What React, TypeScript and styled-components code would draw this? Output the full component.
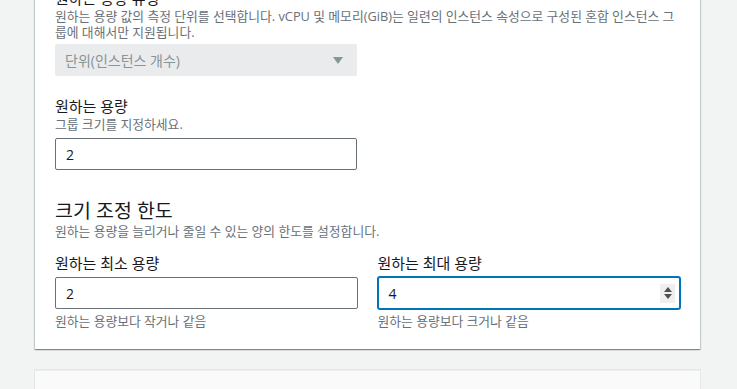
import styled, { createGlobalStyle } from 'styled-components';

const GlobalStyle = createGlobalStyle`
  html, body {
    margin: 0;
    padding: 0;
    background-color: #f2f3f3;
    overflow: hidden;
  }
  body {
    font-family: "Open Sans", "Noto Sans CJK KR", sans-serif;
    color: #16191f;
  }
`;

const Page = styled.div`
  display: flex;
  flex-direction: column;
  gap: 21px;
  padding: 0 37px 0 35px;
  margin-top: -33px;
`;

const Card = styled.section<{ $muted?: boolean }>`
  background-color: ${(p) => (p.$muted ? '#fafafa' : '#ffffff')};
  border-top: 1px solid #eaeded;
  box-shadow: ${(p) =>
    p.$muted
      ? '0 0 0 1px #e4e7e7'
      : '0 1px 1px 0 rgba(0, 28, 36, 0.3), 1px 1px 1px 0 rgba(0, 28, 36, 0.15), -1px 1px 1px 0 rgba(0, 28, 36, 0.15)'};
  padding: 20px 20px 20px;
  display: flex;
  flex-direction: column;
  gap: 20px;
  min-height: ${(p) => (p.$muted ? '60px' : 'auto')};
`;

const Field = styled.div`
  display: flex;
  flex-direction: column;
`;

const Label = styled.div`
  font-size: 15px;
  line-height: 20px;
  color: #16191f;
`;

const Desc = styled.div`
  font-size: 12.8px;
  line-height: 16px;
  color: #687078;
  word-break: normal;
  line-break: anywhere;
`;

const Control = styled.div<{ $gap?: number }>`
  margin-top: ${(p) => p.$gap ?? 6}px;
  position: relative;
`;

const Select = styled.div`
  height: 32px;
  box-sizing: border-box;
  background-color: #e9ebed;
  border-radius: 2px;
  padding: 0 14px 0 10px;
  display: flex;
  align-items: center;
  justify-content: space-between;
  font-size: 14px;
  color: #879596;
  width: 302px;
`;

const Caret = styled.span`
  width: 0;
  height: 0;
  border-left: 5px solid transparent;
  border-right: 5px solid transparent;
  border-top: 7px solid #879596;
`;

const Input = styled.div<{ $focus?: boolean }>`
  height: 32px;
  box-sizing: border-box;
  border: 1px solid ${(p) => (p.$focus ? '#0073bb' : '#687078')};
  box-shadow: ${(p) => (p.$focus ? '0 0 0 1px #0073bb' : 'none')};
  border-radius: 2px;
  background: #fff;
  padding: 0 10px;
  display: flex;
  align-items: center;
  justify-content: space-between;
  font-size: 14px;
  color: #16191f;
`;

const Spinner = styled.div`
  width: 15px;
  height: 19px;
  background-color: #efefef;
  display: flex;
  flex-direction: column;
  align-items: center;
  justify-content: center;
  gap: 2px;
  margin-right: -6px;
`;

const Arrow = styled.span<{ $up?: boolean }>`
  width: 0;
  height: 0;
  border-left: 4px solid transparent;
  border-right: 4px solid transparent;
  ${(p) => (p.$up ? 'border-bottom: 5px solid #505050;' : 'border-top: 5px solid #505050;')}
`;

const Section = styled.div`
  display: flex;
  flex-direction: column;
  margin-top: 9px;
`;

const Heading = styled.h2`
  margin: 0;
  font-weight: 400;
  font-size: 19.5px;
  line-height: 24px;
  color: #16191f;
`;

const Columns = styled.div`
  display: grid;
  grid-template-columns: 1fr 1fr;
  gap: 20px;
  margin-top: 14px;
`;

const Hint = styled(Desc)`
  margin-top: 4px;
`;

export default function App() {
  return (
    <>
      <GlobalStyle />
      <Page>
        <Card>
          <Field>
            <Label>원하는 용량 유형</Label>
            <Desc>
              원하는 용량 값의 측정 단위를 선택합니다. vCPU 및 메모리(GiB)는 일련의 인스턴스 속성으로
              구성된 혼합 인스턴스 그룹에 대해서만 지원됩니다.
            </Desc>
            <Control $gap={4}>
              <Select>
                <span>단위(인스턴스 개수)</span>
                <Caret />
              </Select>
            </Control>
          </Field>
          <Field>
            <Label>원하는 용량</Label>
            <Desc>그룹 크기를 지정하세요.</Desc>
            <Control style={{ width: 302 }}>
              <Input>2</Input>
            </Control>
          </Field>
          <Section>
            <Heading>크기 조정 한도</Heading>
            <Desc>원하는 용량을 늘리거나 줄일 수 있는 양의 한도를 설정합니다.</Desc>
            <Columns>
              <Field>
                <Label>원하는 최소 용량</Label>
                <Control $gap={4}>
                  <Input>2</Input>
                </Control>
                <Hint>원하는 용량보다 작거나 같음</Hint>
              </Field>
              <Field>
                <Label>원하는 최대 용량</Label>
                <Control $gap={4}>
                  <Input $focus>
                    <span>4</span>
                    <Spinner>
                      <Arrow $up />
                      <Arrow />
                    </Spinner>
                  </Input>
                </Control>
                <Hint>원하는 용량보다 크거나 같음</Hint>
              </Field>
            </Columns>
          </Section>
        </Card>
        <Card $muted />
      </Page>
    </>
  );
}
